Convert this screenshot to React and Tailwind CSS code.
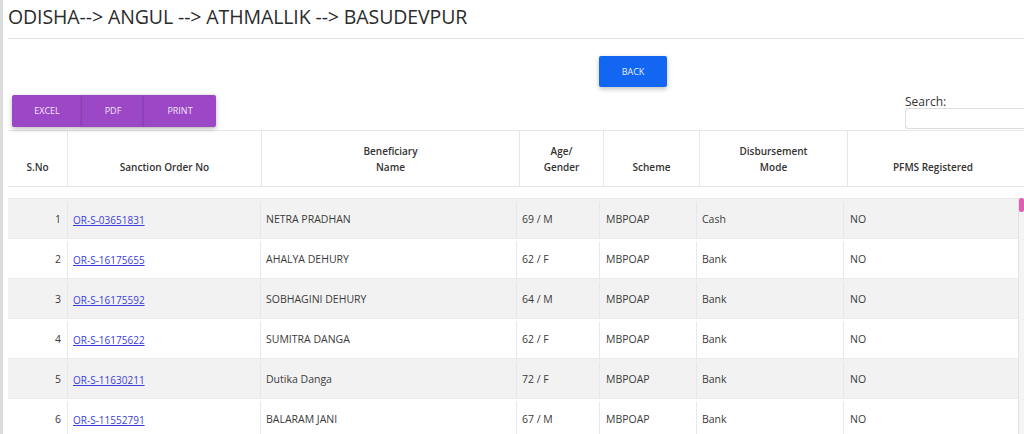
import React from "react";

const rows = [
  ["1", "OR-S-03651831", "NETRA PRADHAN", "69 / M", "MBPOAP", "Cash", "NO"],
  ["2", "OR-S-16175655", "AHALYA DEHURY", "62 / F", "MBPOAP", "Bank", "NO"],
  ["3", "OR-S-16175592", "SOBHAGINI DEHURY", "64 / M", "MBPOAP", "Bank", "NO"],
  ["4", "OR-S-16175622", "SUMITRA DANGA", "62 / F", "MBPOAP", "Bank", "NO"],
  ["5", "OR-S-11630211", "Dutika Danga", "72 / F", "MBPOAP", "Bank", "NO"],
  ["6", "OR-S-11552791", "BALARAM JANI", "67 / M", "MBPOAP", "Bank", "NO"],
];

export default function App() {
  return (
    <div
      className="h-[434px] w-[1024px] overflow-hidden bg-white text-[#333] border-l-[3px] border-[#dcdcdc]"
      style={{ fontFamily: '"Open Sans", "Noto Sans", sans-serif' }}
    >
      <div className="pl-[5px]">
        <h1 className="h-[38px] pt-[3px] text-[19.5px] leading-[28px] tracking-[-0.1px] text-[#2b2b2b]">
          ODISHA--&gt; ANGUL --&gt; ATHMALLIK --&gt; BASUDEVPUR
        </h1>
        <div className="h-px bg-[#e4e4e4]" />

        <div className="flex h-[56px] items-end pl-[591px] pb-[8px]">
          <button className="h-[31px] w-[68px] rounded-[2px] bg-[#1266f1] text-[9px] text-[#e8eeff] shadow-[0_2px_5px_rgba(0,0,0,0.25)]">
            BACK
          </button>
        </div>

        <div className="flex h-[35px] items-start justify-between">
          <div className="ml-[4px] flex h-[32px] rounded-[2px] bg-[#9b47c6] shadow-[0_2px_5px_rgba(0,0,0,0.25)] text-[9px] text-[#f3e6fa]">
            <div className="flex w-[70px] items-center justify-center">EXCEL</div>
            <div className="flex w-[62px] items-center justify-center shadow-[-1px_0_2px_rgba(0,0,0,0.15)]">PDF</div>
            <div className="flex w-[72px] items-center justify-center shadow-[-1px_0_2px_rgba(0,0,0,0.15)]">PRINT</div>
          </div>
          <div className="flex flex-col">
            <span className="text-[12px] leading-[13px] text-[#333]">Search:</span>
            <div className="h-[21px] w-[119px] rounded-l-[3px] border border-r-0 border-[#dedede]" />
          </div>
        </div>

        {/* header */}
        <div className="flex h-[57px] border-y border-[#e6e6e6] text-[10px] font-semibold leading-[16px] text-[#333]">
          <div className="flex w-[59px] items-end justify-center pb-[11px]">S.No</div>
          <div className="flex w-[194px] items-end justify-center border-l border-[#e6e6e6] pb-[11px]">Sanction Order No</div>
          <div className="flex w-[258px] items-end justify-center border-l border-[#e6e6e6] pb-[11px] text-center">Beneficiary<br />Name</div>
          <div className="flex w-[84px] items-end justify-center border-l border-[#e6e6e6] pb-[11px] text-center">Age/<br />Gender</div>
          <div className="flex w-[96px] items-end justify-center border-l border-[#e6e6e6] pb-[11px]">Scheme</div>
          <div className="flex w-[148px] items-end justify-center border-l border-[#e6e6e6] pb-[11px] text-center">Disbursement<br />Mode</div>
          <div className="flex w-[171px] items-end justify-center border-l border-[#e6e6e6] pb-[11px]">PFMS Registered</div>
        </div>

        {/* body */}
        <div className="mt-[11px] flex">
          <div className="w-[1010px] border-t border-[#e9e9e9] text-[10.5px] text-[#3a3a3a]">
            {rows.map((r, i) => (
              <div
                key={r[0]}
                className={`flex h-[40px] items-center border-b border-[#ececec] pt-[3px] ${i % 2 === 0 ? "bg-[#f2f2f2]" : "bg-white"}`}
              >
                <div className="flex h-full w-[59px] items-center justify-end pr-[6px]">{r[0]}</div>
                <div className="flex h-full w-[193px] items-center border-l border-[#e4e9ef] pl-[5px]">
                  <a href="#" className="text-[10px] text-[#3d3ddb] underline">{r[1]}</a>
                </div>
                <div className="flex h-full w-[256px] items-center border-l border-[#e4e9ef] pl-[5px]">{r[2]}</div>
                <div className="flex h-full w-[83px] items-center border-l border-[#e4e9ef] pl-[5px]">{r[3]}</div>
                <div className="flex h-full w-[97px] items-center border-l border-[#e4e9ef] pl-[6px]">{r[4]}</div>
                <div className="flex h-full w-[147px] items-center border-l border-[#e4e9ef] pl-[5px]">{r[5]}</div>
                <div className="flex h-full w-[175px] items-center border-l border-[#e4e9ef] pl-[6px]">{r[6]}</div>
              </div>
            ))}
          </div>
          <div className="flex w-[6px] flex-col border-l border-[#e2e2e2] bg-[#f4f4f4]">
            <div className="h-[14px] rounded-[2px] bg-[#df5fb3]" />
          </div>
        </div>
      </div>
    </div>
  );
}
